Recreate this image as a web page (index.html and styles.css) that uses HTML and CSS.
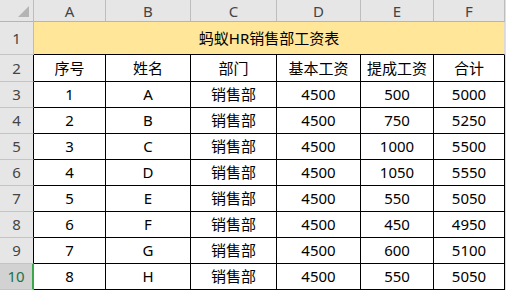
FILE: index.html
```html
<!DOCTYPE html>
<html lang="zh-CN">
<head>
<meta charset="utf-8">
<title>蚂蚁HR销售部工资表</title>
<link rel="stylesheet" href="styles.css">
</head>
<body>
<div class="sheet">
  <div class="hd corner"><span class="tri"></span></div>
  <div class="hd">A</div>
  <div class="hd">B</div>
  <div class="hd">C</div>
  <div class="hd">D</div>
  <div class="hd">E</div>
  <div class="hd last">F</div>

  <div class="rh">1</div>
  <div class="title">蚂蚁HR销售部工资表</div>

  <div class="rh dark">2</div>
  <div class="c">序号</div><div class="c">姓名</div><div class="c">部门</div><div class="c">基本工资</div><div class="c">提成工资</div><div class="c">合计</div>

  <div class="rh dark">3</div>
  <div class="c">1</div><div class="c">A</div><div class="c">销售部</div><div class="c">4500</div><div class="c">500</div><div class="c">5000</div>

  <div class="rh dark">4</div>
  <div class="c">2</div><div class="c">B</div><div class="c">销售部</div><div class="c">4500</div><div class="c">750</div><div class="c">5250</div>

  <div class="rh dark">5</div>
  <div class="c">3</div><div class="c">C</div><div class="c">销售部</div><div class="c">4500</div><div class="c">1000</div><div class="c">5500</div>

  <div class="rh dark">6</div>
  <div class="c">4</div><div class="c">D</div><div class="c">销售部</div><div class="c">4500</div><div class="c">1050</div><div class="c">5550</div>

  <div class="rh dark">7</div>
  <div class="c">5</div><div class="c">E</div><div class="c">销售部</div><div class="c">4500</div><div class="c">550</div><div class="c">5050</div>

  <div class="rh dark">8</div>
  <div class="c">6</div><div class="c">F</div><div class="c">销售部</div><div class="c">4500</div><div class="c">450</div><div class="c">4950</div>

  <div class="rh dark">9</div>
  <div class="c">7</div><div class="c">G</div><div class="c">销售部</div><div class="c">4500</div><div class="c">600</div><div class="c">5100</div>

  <div class="rh active">10</div>
  <div class="c">8</div><div class="c">H</div><div class="c">销售部</div><div class="c">4500</div><div class="c">550</div><div class="c">5050</div>
</div>
</body>
</html>
```

FILE: styles.css
```css
html, body {
  margin: 0;
  padding: 0;
  background: #ffffff;
}

body {
  font-family: "Noto Sans", "Noto Sans CJK SC", sans-serif;
  font-size: 15px;
  color: #000;
}

.sheet {
  display: grid;
  grid-template-columns: 34px 72px 85px 86px 84px 73px 71px;
  grid-template-rows: 22px 33px 27px repeat(8, 26px);
  width: 506px;
  border-right: 1px solid #e0e0e0;
  box-sizing: border-box;
}

.sheet > div {
  box-sizing: border-box;
  display: flex;
  align-items: center;
  justify-content: center;
  line-height: 1;
  white-space: nowrap;
}

.hd {
  background: #e6e6e6;
  color: #444;
  border-right: 1px solid #bdbdbd;
  border-bottom: 1px solid #b5b5b5;
  padding-top: 1px;
}

.corner {
  justify-content: flex-end !important;
  align-items: flex-end !important;
  padding: 0 4px 4px 0;
}

.tri {
  width: 0;
  height: 0;
  border-left: 11px solid transparent;
  border-bottom: 11px solid #b4b4b4;
}

.rh {
  background: #e6e6e6;
  color: #444;
  border-right: 1px solid #bdbdbd;
  border-bottom: 1px solid #c4c4c4;
}

.rh.dark {
  border-right-color: #000;
}

.rh.active {
  background: #d2d2d2;
  color: #217346;
  border-right: 2px solid #3ca64a;
}

.title {
  grid-column: 2 / span 6;
  background: #ffe699;
  border-bottom: 1px solid #000;
  border-right: 1px solid #d9d9d9;
}

.c {
  border-right: 1px solid #000;
  border-bottom: 1px solid #000;
  background: #fff;
}
```
